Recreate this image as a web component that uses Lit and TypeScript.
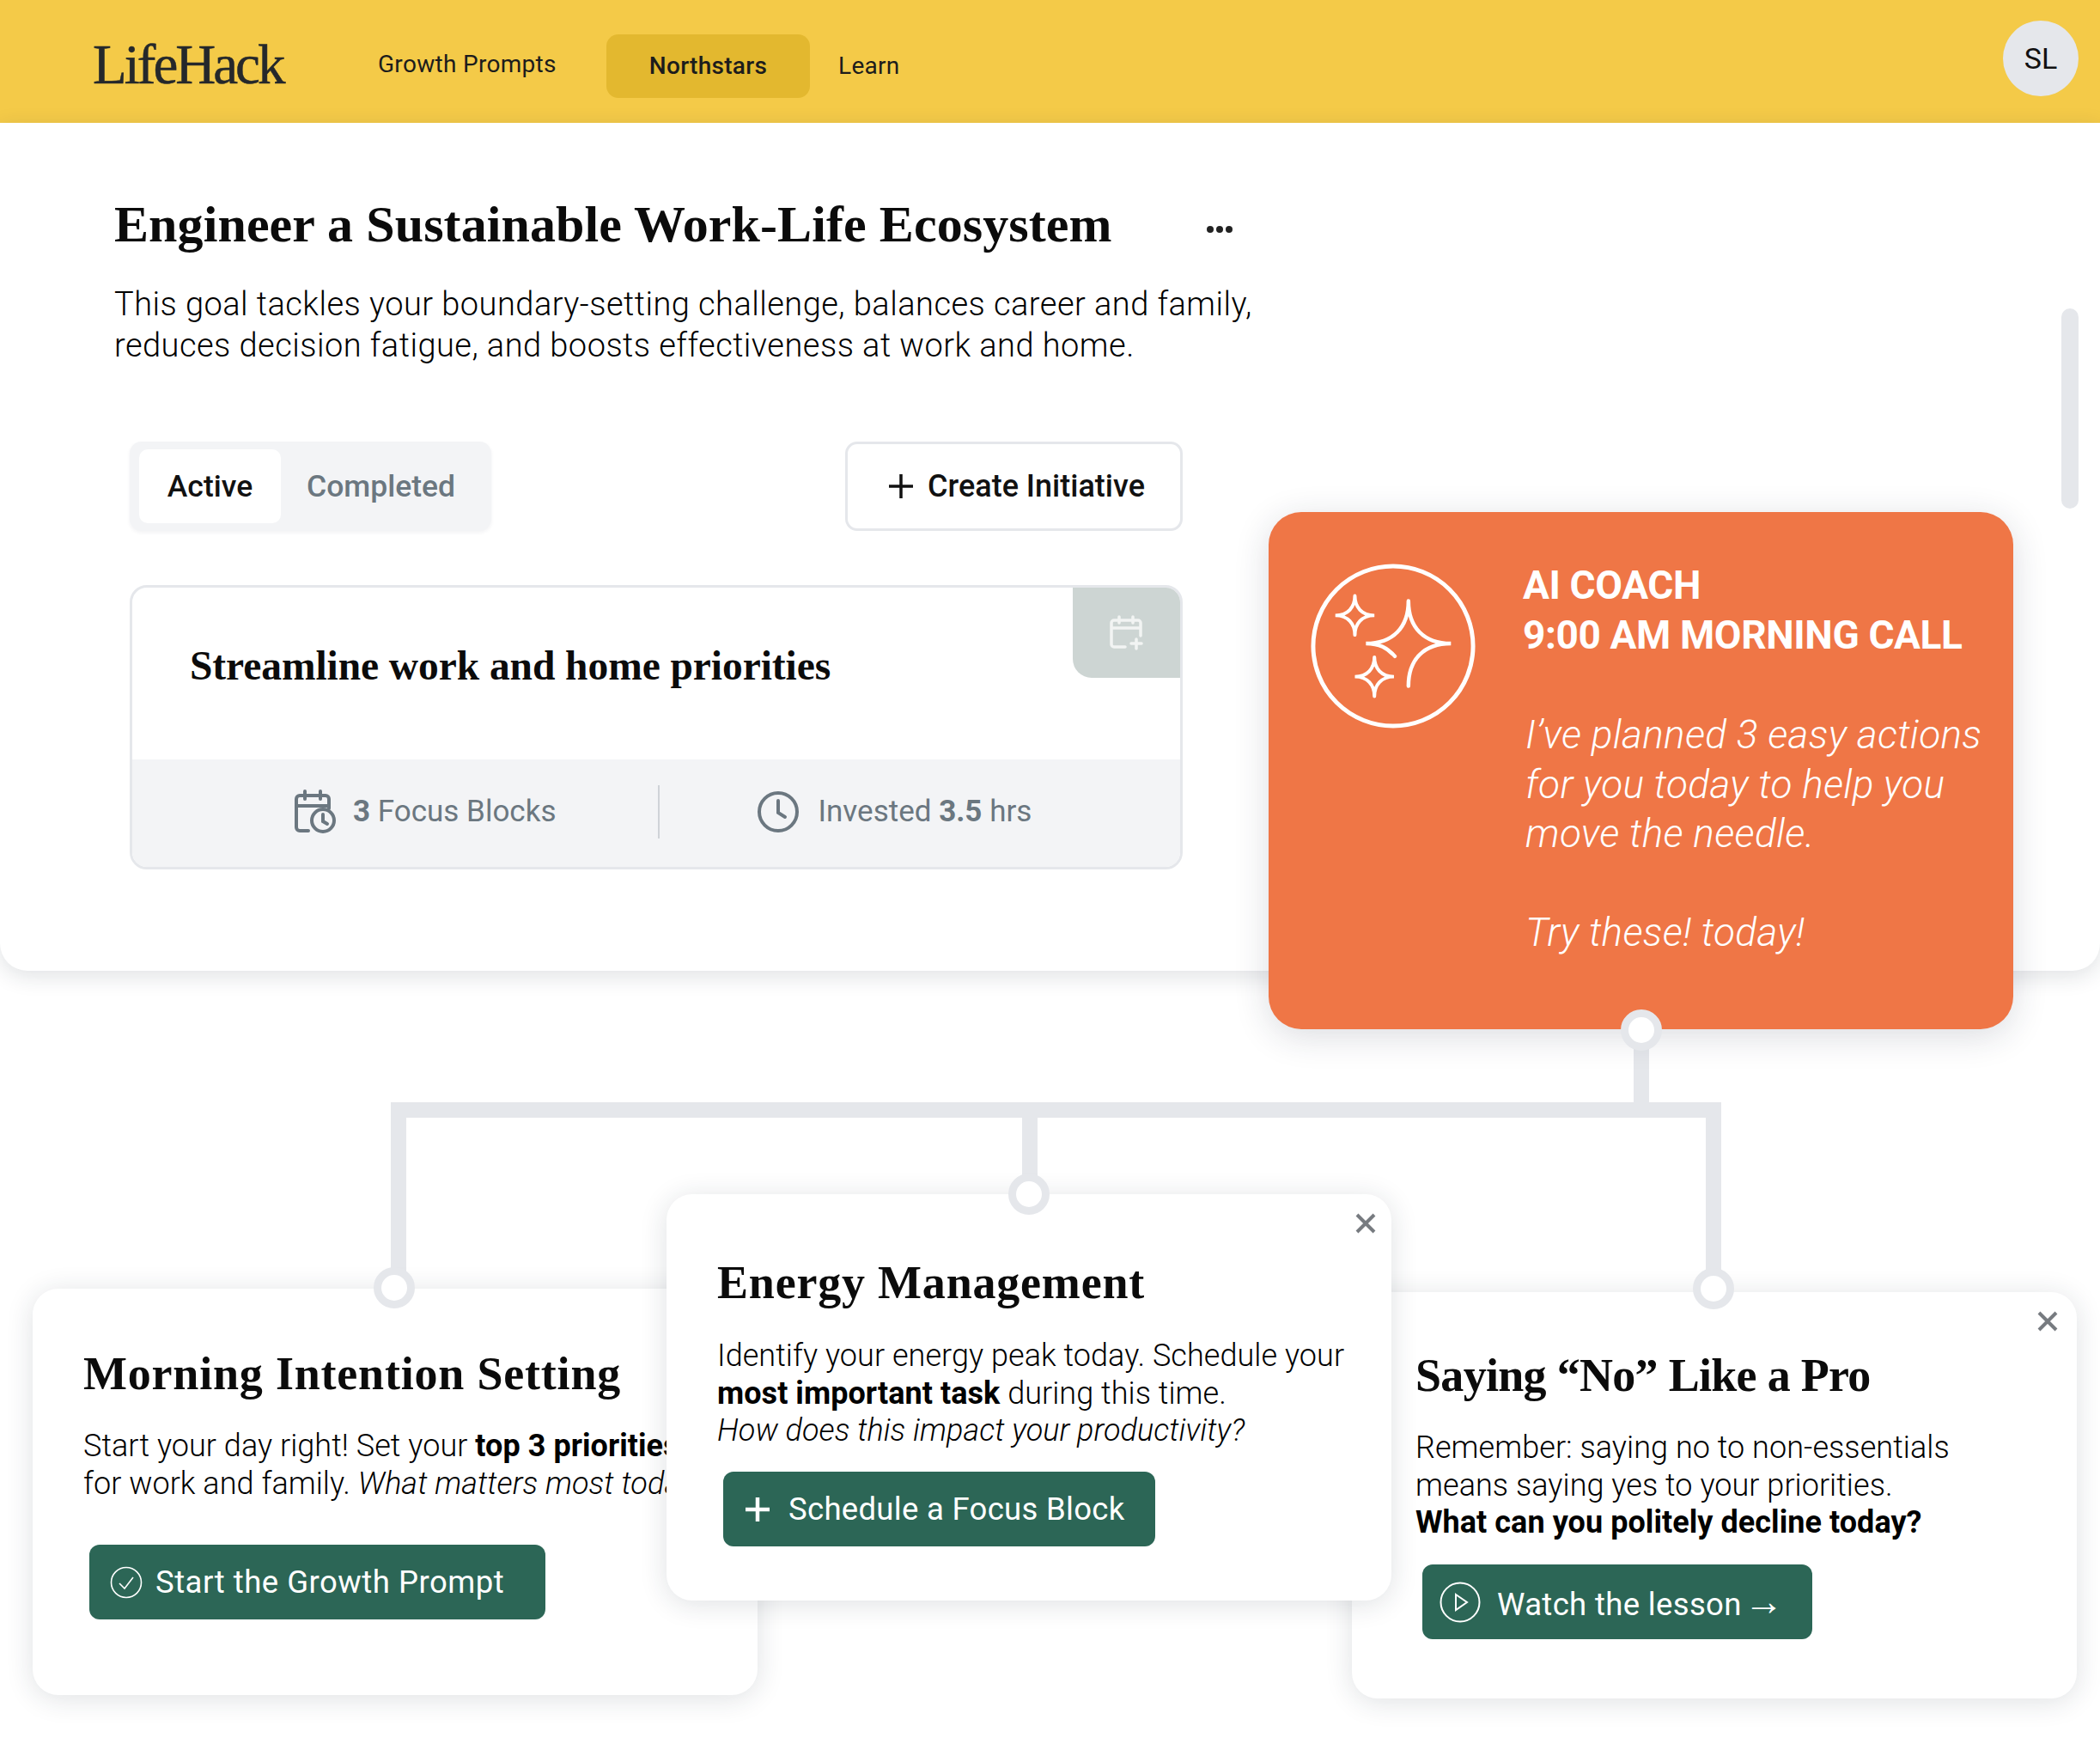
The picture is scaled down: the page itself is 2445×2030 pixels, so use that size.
import { LitElement, html, css, svg } from "lit";
import { customElement } from "lit/decorators.js";

const closeIcon = html`<svg class="close" width="26" height="26" viewBox="0 0 26 26" fill="none" stroke="#777b80" stroke-width="4"><path d="M3 3l20 20M23 3L3 23"/></svg>`;

const sparkles = svg`
  <circle cx="100" cy="100" r="94" stroke-width="5"/>
  <path d="M118 47C118 78 136 97 168 97C136 97 118 116 118 147M118 47C118 78 100 97 68 97C84 97 93 102 102 112" stroke-width="4.5"/>
  <path d="M55 41C55 54 63 64 78 64C63 64 55 74 55 87M55 41C55 54 47 64 32 64C47 64 55 74 55 87" stroke-width="4"/>
  <path d="M78 113C78 126 86 136 101 136C86 136 78 146 78 159M78 113C78 126 70 136 55 136C70 136 78 146 78 159" stroke-width="4"/>
`;

@customElement("app-root")
export class AppRoot extends LitElement {
  static styles = css`
    :host {
      display: block;
      position: relative;
      width: 2445px;
      height: 2030px;
      overflow: hidden;
      background: #fff;
      font-family: Roboto, "Liberation Sans", sans-serif;
      color: #111;
    }
    h1, h2, h3, p { margin: 0; }
    .serif { font-family: "Liberation Serif", serif; font-weight: 700; color: #0b0b0b; }

    header {
      height: 143px;
      background: #f4ca48;
      display: flex;
      align-items: center;
      padding: 0 25px 0 108px;
      box-sizing: border-box;
    }
    .logo {
      font-family: "Liberation Serif", serif;
      font-size: 65px;
      letter-spacing: -3px;
      color: #25282b;
      width: 332px;
      margin-top: 8px;
      -webkit-text-stroke: 0.5px #25282b;
    }
    nav { display: flex; align-items: center; font-size: 28px; letter-spacing: 0.3px; color: #1c1c1c; margin-top: 10px; }
    nav .growth { width: 266px; margin-bottom: 4px; }
    nav .pill {
      background: #e3b82f;
      border-radius: 14px;
      width: 237px;
      height: 74px;
      display: flex;
      align-items: center;
      justify-content: center;
      margin-right: 33px;
      font-weight: 500;
    }
    .avatar {
      margin-left: auto;
      width: 88px;
      height: 88px;
      border-radius: 50%;
      background: #e5e7eb;
      display: flex;
      align-items: center;
      justify-content: center;
      font-size: 34px;
      margin-bottom: 8px;
    }
    .scrollbar {
      position: absolute;
      z-index: 2;
      left: 2400px;
      top: 359px;
      width: 20px;
      height: 233px;
      border-radius: 10px;
      background: #e5e7eb;
    }

    .panel {
      height: 987px;
      box-sizing: border-box;
      padding: 82px 0 0 133px;
      border-radius: 0 0 32px 32px;
      background: #fff;
      box-shadow: 0 6px 26px rgba(30, 40, 60, 0.14);
    }
    .title-row { display: flex; align-items: center; }
    h1 { font-size: 60px; line-height: 72px; letter-spacing: 0.09px; width: 1272px; }
    .dots { display: flex; gap: 3px; margin-top: 12px; }
    .dots i { width: 8px; height: 8px; border-radius: 50%; background: #222; }
    .lead { font-size: 38px; line-height: 48px; margin-top: 33px; letter-spacing: 0.46px; font-weight: 300; color: #000; }

    .controls {
      margin: 88px 0 0 18px;
      width: 1226px;
      display: flex;
      justify-content: space-between;
    }
    .tabs {
      display: flex;
      align-items: center;
      width: 421px;
      height: 104px;
      padding: 9px 11px;
      box-sizing: border-box;
      background: #f3f4f6;
      border-radius: 14px;
      font-size: 35.5px;
      font-weight: 500;
      color: #6b7780;
      box-shadow: 0 2px 4px rgba(30, 40, 60, 0.06);
    }
    .tabs .on {
      width: 165px;
      height: 86px;
      background: #fff;
      border-radius: 10px;
      color: #111;
      display: flex;
      align-items: center;
      justify-content: center;
      margin-right: 30px;
    }
    .create {
      width: 393px;
      height: 104px;
      box-sizing: border-box;
      border: 3px solid #e5e7eb;
      border-radius: 14px;
      display: flex;
      align-items: center;
      justify-content: center;
      gap: 16px;
      padding-left: 6px;
      font-size: 36px;
      font-weight: 500;
      color: #111;
    }

    .initiative {
      position: relative;
      margin: 63px 0 0 18px;
      width: 1226px;
      height: 331px;
      box-sizing: border-box;
      border: 3px solid #e5e7eb;
      border-radius: 20px;
      overflow: hidden;
      display: flex;
      flex-direction: column;
    }
    .initiative .top { height: 200px; padding: 0 0 18px 67px; display: flex; align-items: center; box-sizing: border-box; }
    .initiative h2 { font-size: 47.5px; letter-spacing: -0.07px; }
    .tag {
      position: absolute;
      top: 0;
      right: 0;
      width: 125px;
      height: 105px;
      background: #cdd5d3;
      border-bottom-left-radius: 22px;
      display: flex;
      align-items: center;
      justify-content: center;
    }
    .stats {
      flex: 1;
      background: #f3f4f6;
      display: flex;
      align-items: center;
      font-size: 35px;
      color: #6b7780;
      padding-bottom: 4px;
    }
    .stats .stat { display: flex; align-items: center; flex: 1; gap: 20px; }
    .stats .stat:first-child { justify-content: flex-end; padding-right: 120px; }
    .stats .stat:last-child { justify-content: flex-start; padding-left: 113px; gap: 22px; }
    .stats .sep { width: 2px; height: 62px; background: #cfd3d8; margin-left: -2px; }
    .stats b { font-weight: 700; }

    .coach {
      position: absolute;
      z-index: 3;
      left: 1477px;
      top: 596px;
      width: 867px;
      height: 602px;
      box-sizing: border-box;
      padding: 57px 20px 0 46px;
      background: #ef7646;
      border-radius: 38px;
      color: #fff;
      display: flex;
      box-shadow: 0 8px 40px rgba(30, 40, 60, 0.16);
    }
    .coach svg { flex: none; margin-right: 55px; }
    .coach > div { margin-top: -3px; }
    .coach h3 { font-size: 46px; line-height: 58px; font-weight: 700; letter-spacing: -0.4px; margin: 2px 0 0 -3px; }
    .coach p { font-size: 46px; line-height: 57.6px; font-style: italic; font-weight: 300; margin-top: 59px; letter-spacing: 0.3px; }
    .coach p + p { margin-top: 57.6px; }

    .line { position: absolute; background: #e5e7eb; z-index: 1; }
    .line.h { left: 455px; top: 1283px; width: 1549px; height: 18px; }
    .line.stem { left: 1902px; top: 1200px; width: 18px; height: 90px; }
    .line.a { left: 455px; top: 1283px; width: 18px; height: 210px; }
    .line.b { left: 1190px; top: 1283px; width: 18px; height: 100px; }
    .line.c { left: 1986px; top: 1283px; width: 18px; height: 210px; }
    .dot {
      position: absolute;
      z-index: 6;
      width: 48px;
      height: 48px;
      box-sizing: border-box;
      border: 9px solid #e5e7eb;
      border-radius: 50%;
      background: #fff;
      transform: translate(-24px, -24px);
    }

    .card {
      position: absolute;
      width: 844px;
      height: 473px;
      box-sizing: border-box;
      background: #fff;
      border-radius: 30px;
      box-shadow: 0 4px 32px rgba(30, 40, 60, 0.14);
    }
    .card.left { left: 38px; top: 1500px; z-index: 2; padding: 64px 0 0 59px; }
    .card.mid { left: 776px; top: 1390px; z-index: 4; padding: 68px 0 0 59px; }
    .card.right { left: 1574px; top: 1504px; z-index: 2; padding: 62px 0 0 74px; }
    .close { position: absolute; top: 21px; right: 17px; }
    .card.right .close { right: 21px; }
    .card h3 { font-size: 54px; line-height: 70px; white-space: nowrap; }
    .card.left h3 { letter-spacing: 0.8px; }
    .card.mid h3 { letter-spacing: 0.8px; }
    .card.right h3 { letter-spacing: -0.7px; }
    .card p { font-size: 36px; line-height: 43.7px; font-weight: 300; white-space: nowrap; letter-spacing: 0.05px; color: #000; }
    .card.left p { margin-top: 27px; line-height: 44px; }
    .card.mid p { margin-top: 29px; }
    .card.right p { margin-top: 28px; }
    .card b { font-weight: 700; }
    .btn {
      display: inline-flex;
      align-items: center;
      height: 87px;
      box-sizing: border-box;
      background: #2c6656;
      color: #fff;
      border-radius: 12px;
      font-size: 36.5px;
      letter-spacing: 0.5px;
      white-space: nowrap;
    }
    .arrow { font-family: "Liberation Sans", sans-serif; font-size: 46px; margin-left: 3px; line-height: 1; }
    .card.left .btn { width: 531px; margin: 49px 0 0 7px; padding-left: 24px; gap: 15px; }
    .card.mid .btn { width: 503px; margin: 25px 0 0 7px; padding-left: 26px; gap: 22px; letter-spacing: 0.3px; }
    .card.right .btn { width: 454px; margin: 26px 0 0 8px; padding-left: 20px; gap: 19px; letter-spacing: 0.35px; }
  `;

  render() {
    return html`
      <header>
        <div class="logo">LifeHack</div>
        <nav>
          <span class="growth">Growth Prompts</span>
          <span class="pill">Northstars</span>
          <span>Learn</span>
        </nav>
        <div class="avatar">SL</div>
      </header>
      <div class="scrollbar"></div>

      <section class="panel">
        <div class="title-row">
          <h1 class="serif">Engineer a Sustainable Work-Life Ecosystem</h1>
          <div class="dots"><i></i><i></i><i></i></div>
        </div>
        <p class="lead">This goal tackles your boundary-setting challenge, balances career and family,<br />reduces decision fatigue, and boosts effectiveness at work and home.</p>

        <div class="controls">
          <div class="tabs"><span class="on">Active</span><span>Completed</span></div>
          <div class="create">
            <svg width="30" height="30" viewBox="0 0 30 30" stroke="#111" stroke-width="3.5"><path d="M15 1v28M1 15h28"/></svg>
            Create Initiative
          </div>
        </div>

        <div class="initiative">
          <div class="top"><h2 class="serif">Streamline work and home priorities</h2></div>
          <div class="tag">
            <svg width="40" height="42" viewBox="0 0 40 42" fill="none" stroke="#f2f4f3" stroke-width="3.5" stroke-linecap="round"><path d="M18 37H5a3 3 0 0 1-3-3V9a3 3 0 0 1 3-3h28a3 3 0 0 1 3 3v15M11 2v7M27 2v7M3 15h32M31 28v11M25 33h12"/></svg>
          </div>
          <div class="stats">
            <div class="stat">
              <svg width="48" height="52" viewBox="0 0 48 52" fill="none" stroke="#6b7780" stroke-width="4" stroke-linecap="round"><path d="M16 48H6a4 4 0 0 1-4-4V11a4 4 0 0 1 4-4h30a4 4 0 0 1 4 4v11M12 2v9M30 2v9M3 19h36"/><circle cx="33" cy="36" r="13"/><path d="M33 29v8l5 3"/></svg>
              <span><b>3</b> Focus Blocks</span>
            </div>
            <div class="sep"></div>
            <div class="stat">
              <svg width="50" height="50" viewBox="0 0 50 50" fill="none" stroke="#6b7780" stroke-width="4" stroke-linecap="round"><circle cx="25" cy="25" r="22"/><path d="M25 12v14l8 5"/></svg>
              <span>Invested <b>3.5</b> hrs</span>
            </div>
          </div>
        </div>
      </section>

      <aside class="coach">
        <svg width="198" height="198" viewBox="0 0 200 200" fill="none" stroke="#fff" stroke-linecap="round">${sparkles}</svg>
        <div>
          <h3>AI COACH<br />9:00 AM MORNING CALL</h3>
          <p>I’ve planned 3 easy actions<br />for you today to help you<br />move the needle.</p>
          <p>Try these! today!</p>
        </div>
      </aside>

      <div class="line h"></div>
      <div class="line stem"></div>
      <div class="line a"></div>
      <div class="line b"></div>
      <div class="line c"></div>
      <div class="dot" style="left:1911px;top:1199px"></div>
      <div class="dot" style="left:459px;top:1499px"></div>
      <div class="dot" style="left:1198px;top:1390px"></div>
      <div class="dot" style="left:1995px;top:1500px"></div>

      <article class="card left">
        <h3 class="serif">Morning Intention Setting</h3>
        <p>Start your day right! Set your <b>top 3 priorities</b><br />for work and family. <i>What matters most today?</i></p>
        <div class="btn">
          <svg width="38" height="38" viewBox="0 0 38 38" fill="none" stroke="#fff" stroke-width="1.6"><circle cx="19" cy="19" r="17.5"/><path d="M11 20l6 6 10-13"/></svg>
          Start the Growth Prompt
        </div>
      </article>

      <article class="card mid">
        ${closeIcon}
        <h3 class="serif">Energy Management</h3>
        <p>Identify your energy peak today. Schedule your<br /><b>most important task</b> during this time.<br /><i>How does this impact your productivity?</i></p>
        <div class="btn">
          <svg width="28" height="28" viewBox="0 0 28 28" stroke="#fff" stroke-width="4.5"><path d="M14 0v28M0 14h28"/></svg>
          Schedule a Focus Block
        </div>
      </article>

      <article class="card right">
        ${closeIcon}
        <h3 class="serif">Saying “No” Like a Pro</h3>
        <p>Remember: saying no to non-essentials<br />means saying yes to your priorities.<br /><b>What can you politely decline today?</b></p>
        <div class="btn">
          <svg width="48" height="48" viewBox="0 0 48 48" fill="none" stroke="#fff" stroke-width="2"><circle cx="24" cy="24" r="22.5"/><path d="M19 15l13 9-13 9z"/></svg>
          <span>Watch the lesson<span class="arrow">→</span></span>
        </div>
      </article>
    `;
  }
}
